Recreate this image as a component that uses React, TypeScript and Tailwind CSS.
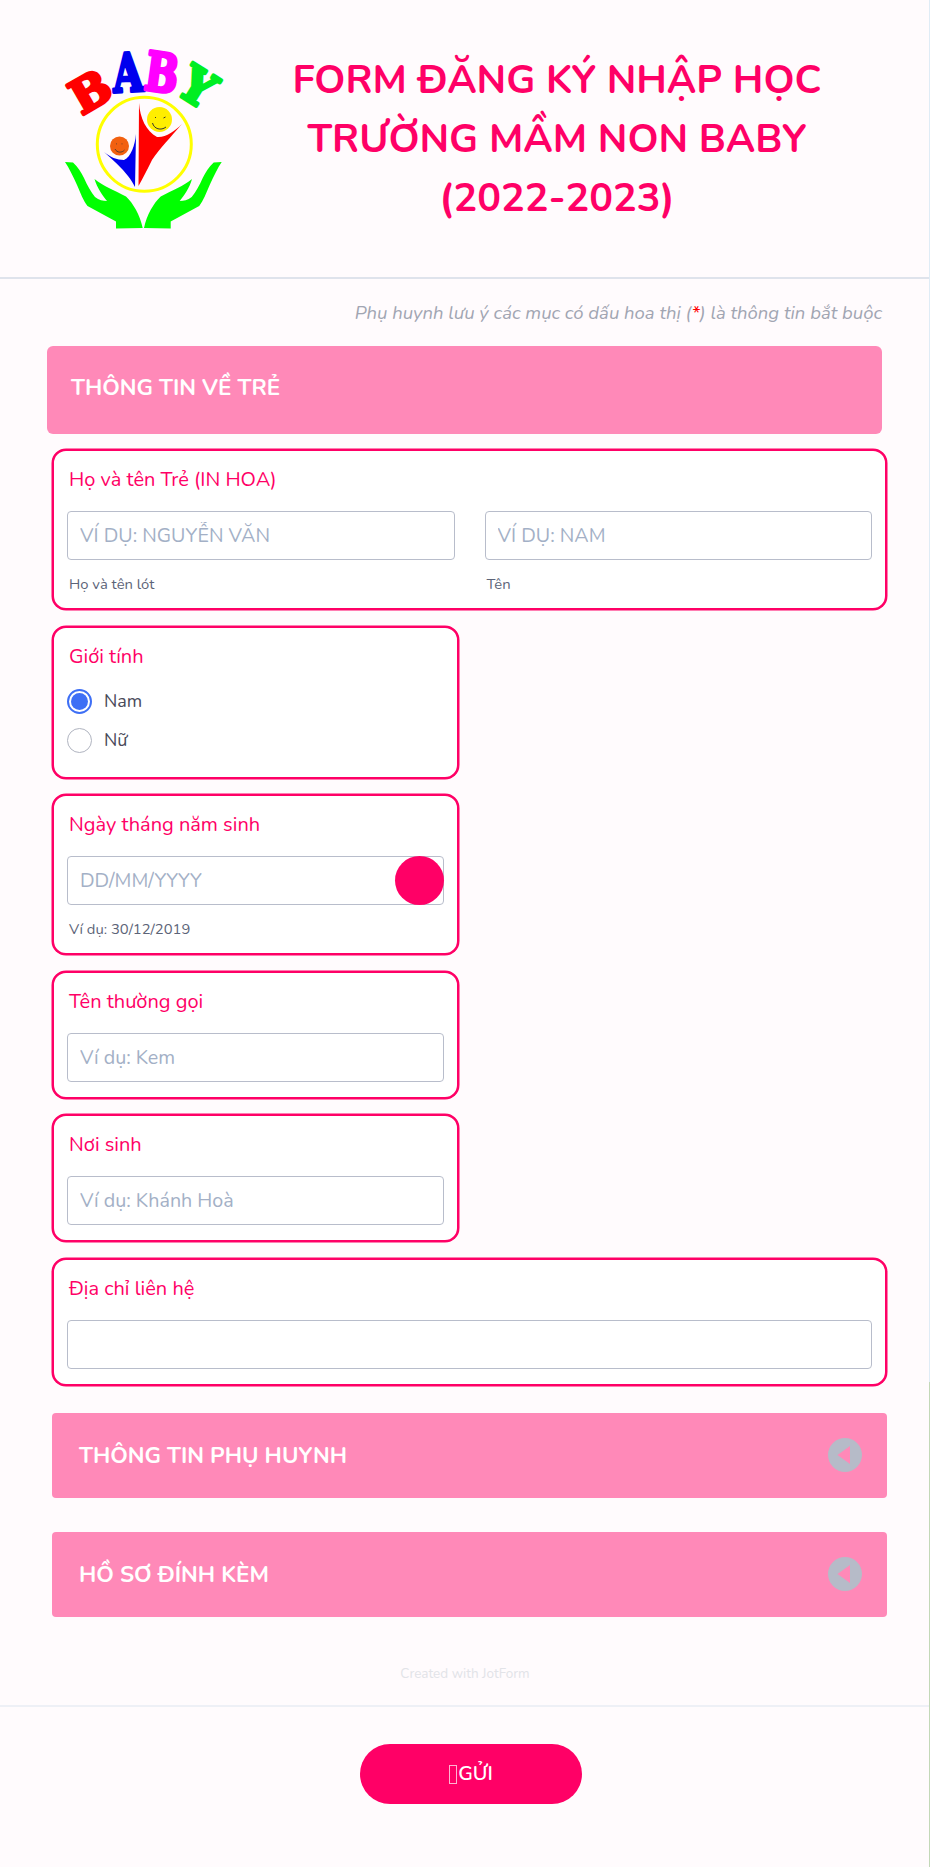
const font = "font-['Nunito','Noto_Sans','Open_Sans',sans-serif]";

const inputCls =
  "w-full h-[49px] rounded-[4px] border border-[#b8bdcb] bg-white px-[12px] text-[19.700px] text-[#1f2937] placeholder:text-[#a3b0c6] outline-none";

function Logo() {
  return (
    <svg viewBox="50 35 180 200" width="180" height="200" className="-ml-[10px] -mt-[10px] shrink-0">
      <g fontFamily="'DejaVu Serif', serif" fontWeight="700" fontSize="46" textAnchor="middle" strokeLinejoin="round">
        <text x="0" y="17" transform="translate(90 91) rotate(-30)" fill="#ff0000" stroke="#ff0000" strokeWidth="3.500">B</text>
        <text x="0" y="17" transform="translate(128 72) rotate(-3) scale(0.85 1.15)" fill="#0000ee" stroke="#0000ee" strokeWidth="3">A</text>
        <text x="0" y="17" transform="translate(162 72) rotate(8) scale(0.85 1.15)" fill="#ff00ff" stroke="#ff00ff" strokeWidth="3.500">B</text>
        <text x="0" y="17" transform="translate(198 86) rotate(32) scale(1 1.05)" fill="#00ee22" stroke="#00ee22" strokeWidth="3.500">Y</text>
      </g>
      <circle cx="144.3" cy="144.3" r="47" fill="none" stroke="#ffff00" strokeWidth="3" />
      <path d="M139 103 C140 118 146 131 157 137 C165 138 175 131 182 124 C170 138 160 148 152 160 C147 170 143 178 138.5 186 Z" fill="#ff0000" />
      <path d="M136 134 C135 145 131 157 124 160 C117 160 110 157 104 152 C113 160 122 168 128 176 C131 180 133 183 135 187 Z" fill="#0000ee" />
      <circle cx="159.5" cy="119.5" r="12.5" fill="#ffee00" />
      <circle cx="119.5" cy="146" r="9.5" fill="#f26010" />
      <path d="M152.5 123 C154 129 161 131 166 127" fill="none" stroke="#333" strokeWidth="1" />
      <path d="M155 117 l1 1 M163.5 118 l2 -1" stroke="#333" strokeWidth="1" />
      <path d="M115 149 C117 153 122 153 124.5 150" fill="none" stroke="#333" strokeWidth="0.8" />
      <path d="M116.5 143.5 v0.8 M122 143.5 v0.8" stroke="#333" strokeWidth="0.8" />
      <g fill="#00ff00">
        <path d="M65 162 L73 162.5 C78 167 81 172 84 178 C87 185 91 192 95 197 C99 200 103 201 107 201 C103 196 97 188 94.5 179 C103 186 114 190 126 196.500 C133 203 140 215 142.700 228 L116 228.500 L116 221.500 L87.500 206 C83 200 81 194 77 185 C73 176 69 168 65 162 Z" />
        <path d="M221.700 162 L213.700 162.500 C208.700 167 205.700 172 202.700 178 C199.700 185 195.700 192 191.700 197 C187.700 200 183.700 201 179.700 201 C183.700 196 189.700 188 192 179 C183.700 186 172.700 190 160.700 196.500 C153.700 203 146.700 215 144 228 L170.700 228.500 L170.700 221.500 L199.200 206 C203.700 200 205.700 194 209.700 185 C213.700 176 217.700 168 221.700 162 Z" />
      </g>
    </svg>
  );
}

function Card({ label, wide, children }: { label: string; wide?: boolean; children: React.ReactNode }) {
  return (
    <div className={`rounded-[14px] border-2 border-[#ff0066] bg-white px-[13px] pt-[16px] shadow-[0_0_0_0.5px_#ff0066] ${wide ? "w-[835px]" : "w-[407px]"}`}>
      <div className="mb-[20px] pl-[2px] text-[20px] leading-[25px] text-[#ff0066]">{label}</div>
      {children}
    </div>
  );
}

function Radio({ label, checked }: { label: string; checked?: boolean }) {
  return (
    <div className="flex h-[39.500px] items-center gap-[12px]">
      {checked ? (
        <span className="flex h-[25px] w-[25px] items-center justify-center rounded-full border-2 border-[#3e6ff5] bg-white">
          <span className="h-[17px] w-[17px] rounded-full bg-[#3e6ff5]" />
        </span>
      ) : (
        <span className="h-[25px] w-[25px] rounded-full border border-[#b0b4c0] bg-white" />
      )}
      <span className="text-[18px] text-[#4a4a5a]">{label}</span>
    </div>
  );
}

function CollapsedBar({ title }: { title: string }) {
  return (
    <div className="flex h-[85.500px] w-[835px] items-center justify-between rounded-[4px] bg-[#ff89b8] pl-[27px] pr-[25px]">
      <span className="mt-[1px] text-[22.400px] font-bold text-white">{title}</span>
      <span className="flex h-[34px] w-[34px] items-center justify-center rounded-full bg-[#b6bbc8]">
        <svg width="14" height="18" viewBox="0 0 14 18" className="-ml-[3px]">
          <path d="M13 0 L13 18 L0.500 9 Z" fill="#ff89b8" />
        </svg>
      </span>
    </div>
  );
}

export default function App() {
  return (
    <div className={`relative h-[1867px] w-full bg-[#fffbfd] ${font}`}>
      {/* stray 1px edge of the page behind the form */}
      <span className="absolute right-0 top-0 h-[1382px] w-px bg-[#dfecf6]" />
      <span className="absolute bottom-0 right-0 h-[485px] w-px bg-[#c3d8b8]" />

      {/* Header */}
      <header className="flex h-[279px] items-start border-b-2 border-[#dfe3ec] pl-[60px] pt-[45px]">
        <Logo />
        <h1 className="flex-1 pr-[46px] pt-[6px] text-center text-[39.600px] font-bold leading-[59px] text-[#ff0066]">
          FORM ĐĂNG KÝ NHẬP HỌC
          <br />
          TRƯỜNG MẦM NON BABY
          <br />
          (2022-2023)
        </h1>
      </header>

      <div className="pl-[47px]">
        <p className="mt-[22px] h-[25px] w-[835px] text-right text-[18.500px] italic leading-[25px] text-[#a1a5b2]">
          Phụ huynh lưu ý các mục có dấu hoa thị (<span className="text-[#ff0000]">*</span>) là thông tin bắt buộc
        </p>
        <div className="mt-[20px] flex h-[88px] w-[835px] items-center rounded-[6px] bg-[#ff89b8] pb-[4px] pl-[24px]">
          <span className="text-[22.400px] font-bold text-white">THÔNG TIN VỀ TRẺ</span>
        </div>
      </div>

      <div className="mt-[15px] flex flex-col gap-[15.500px] pl-[52px]">
        <Card label="Họ và tên Trẻ (IN HOA)" wide>
          <div className="-mt-[1px] flex gap-[30px] pb-[14px]">
            <div className="flex-1">
              <input className={inputCls} placeholder="VÍ DỤ: NGUYỄN VĂN" readOnly />
              <div className="mt-[14px] pl-[2px] text-[14.800px] leading-[20px] text-[#5c6478]">Họ và tên lót</div>
            </div>
            <div className="flex-1">
              <input className={inputCls} placeholder="VÍ DỤ: NAM" readOnly />
              <div className="mt-[14px] pl-[2px] text-[14.800px] leading-[20px] text-[#5c6478]">Tên</div>
            </div>
          </div>
        </Card>

        <Card label="Giới tính">
          <div className="-mt-[7px] pb-[16px]">
            <Radio label="Nam" checked />
            <Radio label="Nữ" />
          </div>
        </Card>

        <Card label="Ngày tháng năm sinh">
          <div className="-mt-[1px] pb-[14px]">
            <div className="relative">
              <input className={inputCls} placeholder="DD/MM/YYYY" readOnly />
              <span className="absolute right-0 top-0 h-[49px] w-[49px] rounded-full bg-[#ff0066]" />
            </div>
            <div className="mt-[14px] pl-[2px] text-[14.800px] leading-[20px] text-[#5c6478]">Ví dụ: 30/12/2019</div>
          </div>
        </Card>

        <Card label="Tên thường gọi">
          <div className="-mt-[1px] pb-[15px]">
            <input className={inputCls} placeholder="Ví dụ: Kem" readOnly />
          </div>
        </Card>

        <Card label="Nơi sinh">
          <div className="-mt-[1px] pb-[15px]">
            <input className={inputCls} placeholder="Ví dụ: Khánh Hoà" readOnly />
          </div>
        </Card>

        <Card label="Địa chỉ liên hệ" wide>
          <div className="-mt-[1px] pb-[15px]">
            <input className={inputCls} readOnly />
          </div>
        </Card>
      </div>

      <div className="mt-[27px] flex flex-col gap-[33.500px] pl-[52px]">
        <CollapsedBar title="THÔNG TIN PHỤ HUYNH" />
        <CollapsedBar title="HỒ SƠ ĐÍNH KÈM" />
      </div>

      <div className="mt-[47px] w-[930px] text-center text-[13.500px] leading-[20px] text-[#e2e3e8]">Created with JotForm</div>

      {/* Footer */}
      <footer className="mt-[21px] flex justify-center border-t-2 border-[#eef0f6] pt-[37px]">
        <button className="ml-[12px] flex h-[60px] w-[222px] items-center justify-center rounded-full bg-[#ff0066] text-[20px] font-semibold text-white">
          <span className="mr-[1px] h-[19px] w-[8px] border border-[#ffb3d1]" />
          GỬI
        </button>
      </footer>
    </div>
  );
}
